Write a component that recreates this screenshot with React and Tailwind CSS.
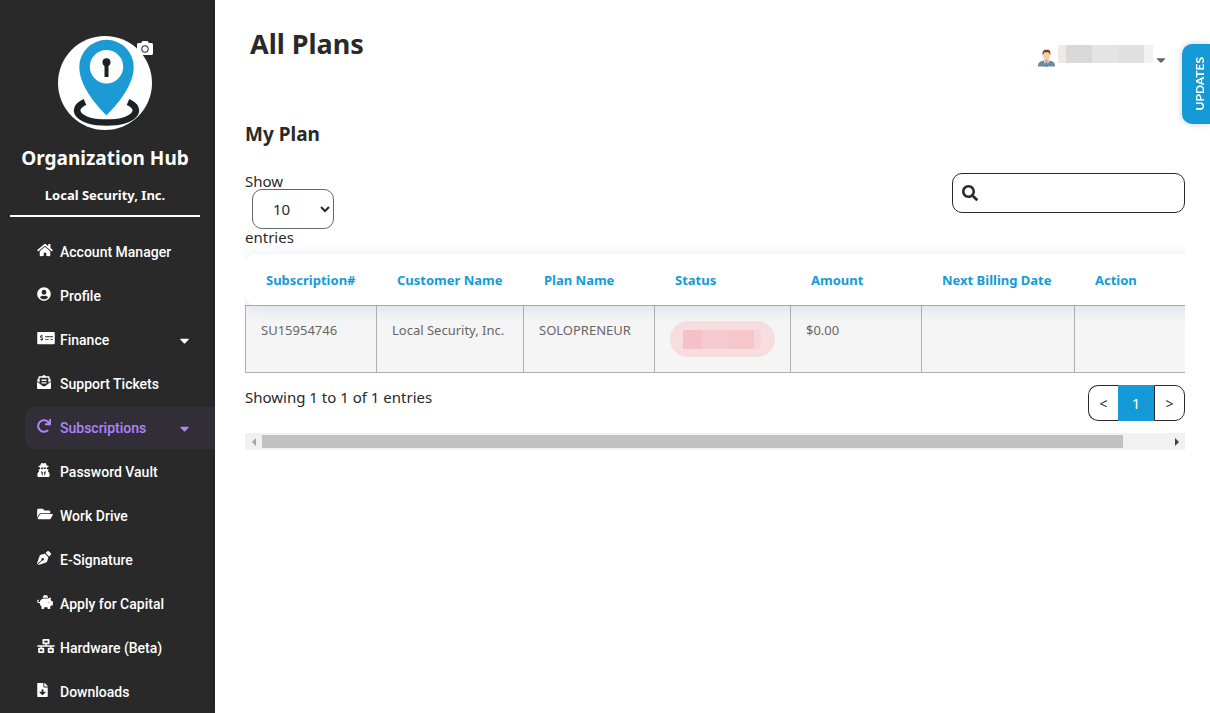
import {
    FaCamera,
    FaCaretDown,
    FaEnvelopeOpenText,
    FaFileDownload,
    FaFolderOpen,
    FaHome,
    FaMoneyCheckAlt,
    FaNetworkWired,
    FaPenNib,
    FaPiggyBank,
    FaRedo,
    FaSearch,
    FaUserCircle,
    FaUserSecret,
} from 'react-icons/fa';

const menu = [
    { label: 'Account Manager', icon: FaHome, size: 'w-4' },
    { label: 'Profile', icon: FaUserCircle, size: 'w-[14px]' },
    { label: 'Finance', icon: FaMoneyCheckAlt, size: 'w-[18px]', children: true },
    { label: 'Support Tickets', icon: FaEnvelopeOpenText, size: 'w-[14px]' },
    { label: 'Subscriptions', icon: FaRedo, size: 'w-[14px]', children: true, active: true },
    { label: 'Password Vault', icon: FaUserSecret, size: 'w-[13px]' },
    { label: 'Work Drive', icon: FaFolderOpen, size: 'w-4' },
    { label: 'E-Signature', icon: FaPenNib, size: 'w-[14px]' },
    { label: 'Apply for Capital', icon: FaPiggyBank, size: 'w-4' },
    { label: 'Hardware (Beta)', icon: FaNetworkWired, size: 'w-[18px]' },
    { label: 'Downloads', icon: FaFileDownload, size: 'w-[11px]' },
];

const columns = [
    { label: 'Subscription#', width: 'w-[131px]' },
    { label: 'Customer Name', width: 'w-[147px]' },
    { label: 'Plan Name', width: 'w-[131px]' },
    { label: 'Status', width: 'w-[136px]' },
    { label: 'Amount', width: 'w-[131px]' },
    { label: 'Next Billing Date', width: 'w-[153px]' },
    { label: 'Action', width: 'w-[161px]' },
];

function Logo() {
    return (
        <svg viewBox="0 0 94 94" className="size-[94px]" aria-label="Organization logo">
            <circle cx="47" cy="47" r="47" fill="#fff" />
            <path d="M27 66C11 73 20 86.500 48.500 86.500S86 73 70 66" fill="none" stroke="#1b2226" strokeWidth="6.500" />
            <path d="M48.500 79.300C39 70 21.300 50 21.300 31a27.200 27.200 0 0 1 54.400 0C75.700 50 58 70 48.500 79.300z" fill="#1b9ad6" />
            <circle cx="48.500" cy="30.700" r="16.700" fill="#fff" />
            <circle cx="48.500" cy="26.300" r="4" fill="#1b2226" />
            <path d="M48.500 27v14" stroke="#1b2226" strokeWidth="4" />
        </svg>
    );
}

function Avatar() {
    return (
        <svg viewBox="0 0 17 18" className="h-[18px] w-[17px]" aria-hidden="true">
            <path d="M0 17.500c0-4 1.500-5 5.500-6h6c4 1 5.500 2 5.500 6z" fill="#6f8796" />
            <path d="M5.500 11.500h6l-3 6z" fill="#f4f7f9" />
            <path d="M7.700 12.500h1.600l.6 5H7.100z" fill="#2f86c9" />
            <path d="M6.500 9h4v3l-2 1.500-2-1.500z" fill="#e0ae7e" />
            <ellipse cx="8.500" cy="6" rx="3.400" ry="4.700" fill="#f3cfa4" />
            <path d="M4.800 6.500C4 2 5.500 1 8 .8c4-.5 5 1.500 4.200 5.700C11.500 4 11 3.500 10 3.300 8 3.500 6.500 3 6 4z" fill="#7c3f22" />
        </svg>
    );
}

function Sidebar() {
    return (
        <aside className="w-[215px] shrink-0 overflow-hidden bg-[#292929] shadow-[inset_-6px_0_6px_-4px_rgba(0,0,0,0.15)]">
            <div className="mr-[15px] ml-[10px] flex flex-col items-center border-b-2 border-white pt-9 text-white">
                <div className="relative">
                    <Logo />
                    <button type="button" aria-label="Change logo" className="absolute top-1 -right-px">
                        <FaCamera className="size-4" />
                    </button>
                </div>
                <h2 className="mt-3 text-[19px] leading-8 font-bold">Organization Hub</h2>
                <p className="mt-[11px] mb-[9px] text-[13px] leading-[21px] font-bold">Local Security, Inc.</p>
            </div>
            <nav className="mt-[14px] flex flex-col gap-[2px] pl-[25px] font-[Roboto,sans-serif] text-[14px] font-medium">
                {menu.map(({ label, icon: Icon, size, children, active }) => (
                    <a
                        key={label}
                        href="#"
                        className={`flex h-[42px] items-center rounded-l-[10px] pr-[23px] pl-3 ${active ? 'bg-[#322e38] text-[#b282fb]' : 'text-white'}`}
                    >
                        <span className="w-[23px] pb-1">
                            <Icon className={`h-[14px] ${size}`} />
                        </span>
                        {label}
                        {children && <FaCaretDown className="ml-auto size-[15px]" />}
                    </a>
                ))}
            </nav>
        </aside>
    );
}

function Header() {
    return (
        <header className="flex items-start justify-between pr-[17px] pl-[5px]">
            <h1 className="pt-6 text-[27px] leading-10 font-bold">All Plans</h1>
            <button type="button" aria-label="User menu" className="flex items-end pt-[45px]">
                <span className="pt-1">
                    <Avatar />
                </span>
                <span className="mb-1 ml-[3px] flex h-[18px] w-[95px]">
                    <span className="w-2 bg-[#eee9e2]" />
                    <span className="w-[26px] bg-[#d9d9d9]" />
                    <span className="w-[26px] bg-[#e4e4e4]" />
                    <span className="w-[26px] bg-[#e0e0e0]" />
                    <span className="w-[9px] bg-[#f2f2f2]" />
                </span>
                <FaCaretDown className="ml-[1px] size-[14px] text-[#666]" />
            </button>
        </header>
    );
}

function PlanTable() {
    return (
        <div className="overflow-hidden pt-2">
            <table className="w-[990px] table-fixed border-separate border-spacing-0 text-left text-[13px]">
                <thead className="relative">
                    <tr className="rounded-[10px] shadow-[0_3px_16px_rgba(90,130,200,0.22)]">
                        {columns.map(({ label, width }) => (
                            <th
                                key={label}
                                className={`${width} h-[51px] bg-white pt-[2px] pl-[21px] font-bold whitespace-nowrap text-[#149bd7] first:rounded-l-[10px]`}
                            >
                                {label}
                            </th>
                        ))}
                    </tr>
                </thead>
                <tbody>
                    <tr className="align-top leading-[18px] text-[#666] *:h-[68px] *:border-y *:border-l *:border-[#b0b0b0] *:bg-[#f5f5f5] *:px-[15px] *:pt-[15px]">
                        <td>SU15954746</td>
                        <td className="whitespace-nowrap">Local Security, Inc.</td>
                        <td>SOLOPRENEUR</td>
                        <td>
                            <span className="flex h-9 w-[105px] items-center rounded-full bg-[#f7dde0] pl-[13px]">
                                <span className="h-[19px] w-[19px] bg-[#f6c0c8]" />
                                <span className="h-[19px] w-[26px] bg-[#f5cad1]" />
                                <span className="h-[19px] w-[26px] bg-[#f6c6cd]" />
                                <span className="h-[19px] w-[7px] bg-[#f6d6da]" />
                            </span>
                        </td>
                        <td>$0.00</td>
                        <td></td>
                        <td></td>
                    </tr>
                </tbody>
            </table>
        </div>
    );
}

function ScrollBar() {
    return (
        <div className="mt-3 flex h-[17px] items-center bg-[#f1f1f1]">
            <button type="button" aria-label="Scroll left" className="flex w-[17px] justify-center">
                <svg viewBox="0 0 4 8" className="h-[8px] w-[4px]"><path d="M4 0v8L0 4z" fill="#a3a3a3" /></svg>
            </button>
            <div className="flex-1">
                <div className="h-[13px] w-[95%] bg-[#c1c1c1]" />
            </div>
            <button type="button" aria-label="Scroll right" className="flex w-[17px] justify-center">
                <svg viewBox="0 0 4 8" className="h-[8px] w-[4px]"><path d="M0 0v8l4-4z" fill="#404040" /></svg>
            </button>
        </div>
    );
}

export default function App() {
    return (
        <div className="flex h-screen overflow-hidden bg-white font-['Noto_Sans','Open_Sans',sans-serif] text-[#292929]">
            <Sidebar />
            <main className="min-w-0 flex-1 pr-[25px] pl-[30px]">
                <Header />
                <h2 className="mt-[51px] text-[19px] leading-8 font-bold">My Plan</h2>
                <div className="mt-[22px] flex items-start justify-between text-[15px]">
                    <label className="flex flex-col items-start leading-[17px]">
                        <span className="pt-px">Show</span>
                        <select
                            defaultValue="10"
                            className="mt-[-1px] ml-[7px] h-10 w-[82px] rounded-[10px] border border-[#666] bg-white pl-4"
                        >
                            <option>10</option>
                            <option>25</option>
                            <option>50</option>
                        </select>
                        entries
                    </label>
                    <label className="mt-px flex h-10 w-[233px] items-center rounded-[10px] border border-[#292929] px-[9px]">
                        <FaSearch className="size-4 shrink-0" />
                        <input type="search" aria-label="Search plans" className="ml-2 min-w-0 flex-1 outline-none" />
                    </label>
                </div>
                <PlanTable />
                <div className="mt-3 flex items-start justify-between">
                    <p className="text-[15px] leading-6">Showing 1 to 1 of 1 entries</p>
                    <div className="flex h-9 text-[14px]">
                        <button type="button" aria-label="Previous page" className="w-[30px] rounded-l-[10px] border border-r-0 border-[#292929]">&lt;</button>
                        <button type="button" className="w-9 bg-[#149bd7] text-[15px] text-white">1</button>
                        <button type="button" aria-label="Next page" className="w-[31px] rounded-r-[10px] border border-[#292929]">&gt;</button>
                    </div>
                </div>
                <ScrollBar />
            </main>
            <button
                type="button"
                className="fixed top-11 right-0 flex h-20 w-7 items-center justify-center rounded-l-[10px] bg-[#149bd7] pl-2 font-[Lato,sans-serif] text-[12px] font-bold text-white shadow-[0_0_6px_rgba(0,0,0,0.2)]"
            >
                <span className="rotate-180 [writing-mode:vertical-rl]">UPDATES</span>
            </button>
        </div>
    );
}
